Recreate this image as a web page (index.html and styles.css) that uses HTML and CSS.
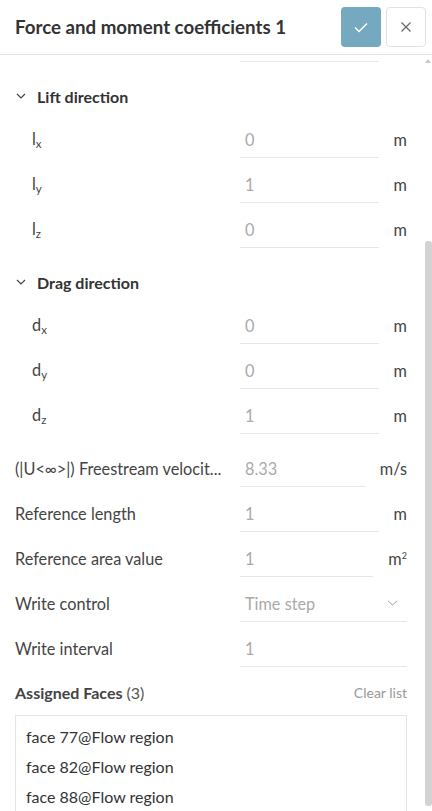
FILE: index.html
```html
<!DOCTYPE html>
<html>
<head>
<meta charset="utf-8">
<link rel="stylesheet" href="styles.css">
</head>
<body>
<div class="panel">
  <header class="head">
    <h1 class="title">Force and moment coefficients 1</h1>
    <button class="btn btn-ok" aria-label="Confirm">
      <svg width="16" height="16" viewBox="0 0 16 16"><path d="M2 8.5 L6 12.5 L14 4.5" fill="none" stroke="#fff" stroke-width="1.4"/></svg>
    </button>
    <button class="btn btn-close" aria-label="Close">
      <svg width="12" height="12" viewBox="0 0 12 12"><path d="M1.5 1.5 L10.5 10.5 M10.5 1.5 L1.5 10.5" fill="none" stroke="#666" stroke-width="1.2"/></svg>
    </button>
  </header>
  <div class="body">
    <div class="scroll">
      <div class="content">
        <div class="row sub cut"><span class="label"></span><span class="field"></span><span class="unit">m</span></div>

        <div class="group-head">
          <svg class="chev" width="10" height="6" viewBox="0 0 10 6"><path d="M1 1 L5 5 L9 1" fill="none" stroke="#444" stroke-width="1.2"/></svg>
          <span>Lift direction</span>
        </div>
        <div class="row sub"><span class="label">l<sub>x</sub></span><span class="field">0</span><span class="unit">m</span></div>
        <div class="row sub"><span class="label">l<sub>y</sub></span><span class="field">1</span><span class="unit">m</span></div>
        <div class="row sub"><span class="label">l<sub>z</sub></span><span class="field">0</span><span class="unit">m</span></div>

        <div class="group-head">
          <svg class="chev" width="10" height="6" viewBox="0 0 10 6"><path d="M1 1 L5 5 L9 1" fill="none" stroke="#444" stroke-width="1.2"/></svg>
          <span>Drag direction</span>
        </div>
        <div class="row sub"><span class="label">d<sub>x</sub></span><span class="field">0</span><span class="unit">m</span></div>
        <div class="row sub"><span class="label">d<sub>y</sub></span><span class="field">0</span><span class="unit">m</span></div>
        <div class="row sub"><span class="label">d<sub>z</sub></span><span class="field">1</span><span class="unit">m</span></div>

        <div class="row first"><span class="label">(|U&lt;∞&gt;|) Freestream velocit...</span><span class="field">8.33</span><span class="unit">m/s</span></div>
        <div class="row"><span class="label">Reference length</span><span class="field">1</span><span class="unit">m</span></div>
        <div class="row"><span class="label">Reference area value</span><span class="field">1</span><span class="unit">m<sup>2</sup></span></div>
        <div class="row"><span class="label">Write control</span><span class="field select">Time step
          <svg width="11" height="6" viewBox="0 0 11 6"><path d="M1 0.8 L5.5 5 L10 0.8" fill="none" stroke="#999" stroke-width="1"/></svg></span></div>
        <div class="row"><span class="label">Write interval</span><span class="field">1</span></div>

        <div class="faces-head">
          <span class="faces-title"><b>Assigned Faces</b> (3)</span>
          <span class="clear">Clear list</span>
        </div>
        <ul class="faces">
          <li>face 77@Flow region</li>
          <li>face 82@Flow region</li>
          <li>face 88@Flow region</li>
        </ul>
      </div>
    </div>
    <div class="sbar">
      <div class="sbar-up"></div>
      <div class="sbar-thumb"></div>
    </div>
  </div>
</div>
</body>
</html>
```

FILE: styles.css
```css
* { box-sizing: border-box; }
html, body { margin: 0; padding: 0; }
body {
  font-family: Lato, "Noto Sans", sans-serif;
  color: #333;
  background: #fff;
  width: 432px;
  height: 811px;
  overflow: hidden;
}
.panel { display: flex; flex-direction: column; height: 811px; }
.head {
  height: 55px;
  display: flex;
  align-items: center;
  padding: 0 6px 1px 15px;
  border-bottom: 1px solid #e4e4e4;
  flex: none;
}
.title {
  margin: 0;
  flex: 1;
  font-size: 18.7px;
  font-weight: 700;
  color: #333;
  white-space: nowrap;
}
.btn {
  width: 40px;
  height: 40px;
  border-radius: 4px;
  display: flex;
  align-items: center;
  justify-content: center;
  padding: 0;
  flex: none;
  cursor: pointer;
}
.btn-ok { background: #74a9bf; border: none; }
.btn-close { background: #fff; border: 1px solid #e2e2e2; margin-left: 5px; }

.body { flex: 1; display: flex; min-height: 0; }
.scroll { flex: 1; overflow: hidden; }
.content { padding: 0 17px 0 15px; margin-top: -30px; }

.row {
  display: flex;
  align-items: center;
  height: 37px;
  margin-bottom: 8px;
  font-size: 16.3px;
}
.row.sub .label { padding-left: 17px; }
.row.first { margin-top: 16px; }
.label {
  width: 225px;
  flex: none;
  color: #444;
  white-space: nowrap;
  padding-right: 3px;
}
.label sub { font-size: 11.5px; vertical-align: -3px; line-height: 1; }
.field {
  flex: 1;
  height: 37px;
  display: flex;
  align-items: center;
  padding-left: 5px;
  border-bottom: 1px solid #e6e6e6;
  color: #aaa;
  font-size: 16.3px;
}
.field.select { justify-content: space-between; padding-right: 9px; }
.unit { margin-left: 15px; color: #444; font-size: 16.3px; }
.unit sup { font-size: 9px; vertical-align: 6px; line-height: 1; }

.group-head {
  display: flex;
  align-items: center;
  height: 24px;
  margin: 22px 0 13px;
  font-size: 16px;
  font-weight: 700;
  color: #333;
}
.chev { margin: 0 11px 0 1px; }

.faces-head {
  display: flex;
  justify-content: space-between;
  align-items: center;
  height: 24px;
  margin-top: 13px;
  font-size: 16px;
}
.faces-title { color: #555; }
.faces-title b { color: #444; }
.clear { color: #999; font-size: 14px; }
.faces {
  list-style: none;
  margin: 11px 0 0;
  padding: 6px 10px;
  border: 1px solid #e4e4e4;
  font-size: 16px;
  color: #333;
}
.faces li { height: 30px; line-height: 30px; }

.sbar { width: 8px; flex: none; display: flex; flex-direction: column; align-items: center; }
.sbar-up {
  width: 0; height: 0;
  margin-top: 4px;
  border-left: 3.5px solid transparent;
  border-right: 3.5px solid transparent;
  border-bottom: 4px solid #c9c9c9;
}
.sbar-thumb {
  width: 7px;
  margin-top: 178px;
  height: 565px;
  background: #d3d3d3;
  border-radius: 3px;
}
```
